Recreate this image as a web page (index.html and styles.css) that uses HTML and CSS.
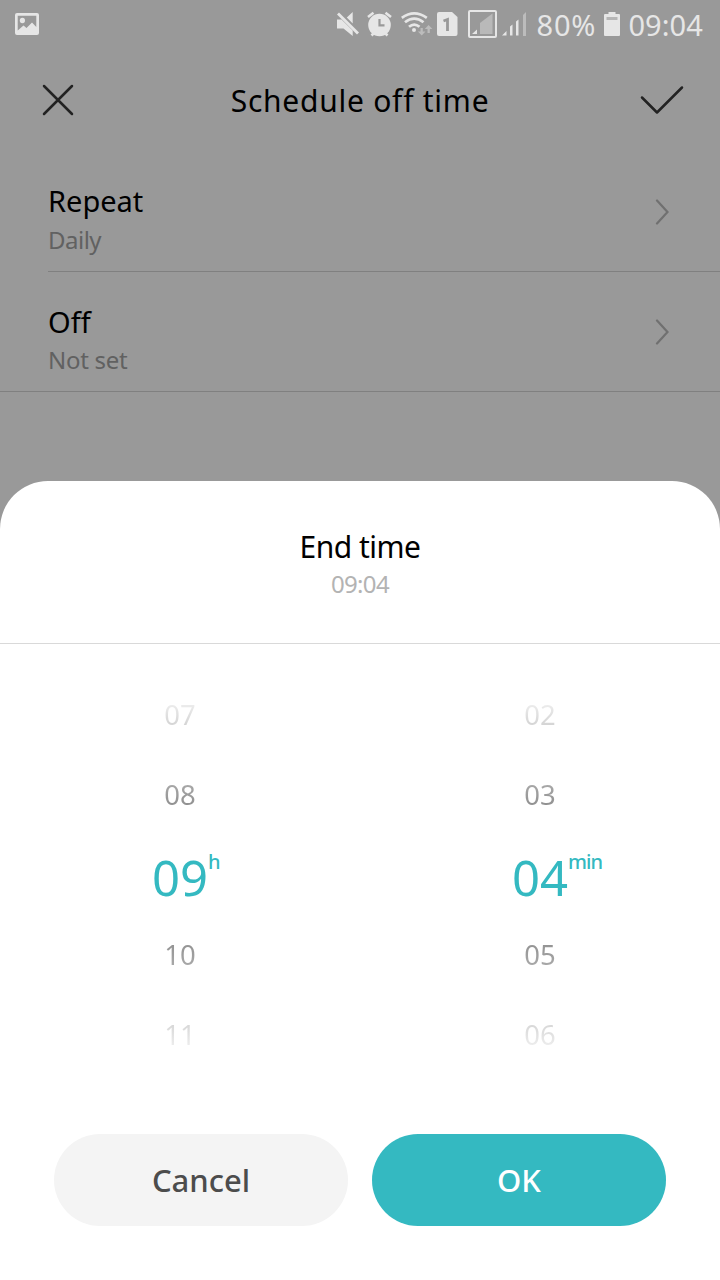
FILE: index.html
```html
<!DOCTYPE html>
<html lang="en">
<head>
<meta charset="utf-8">
<title>Schedule off time</title>
<link rel="stylesheet" href="styles.css">
</head>
<body>
<div class="screen">
  <header class="status">
    <svg class="status-icons" width="720" height="48" viewBox="0 0 720 48" fill="#e6e6e6">
      <path fill-rule="evenodd" d="M17 13H37Q39 13 39 15V33Q39 35 37 35H17Q15 35 15 33V15Q15 13 17 13ZM17.700 15.700V30.500L23.500 25.500L26.500 28L32 22.500L36.300 27V15.700Z"/>
      <ellipse cx="22.400" cy="20.500" rx="2.600" ry="2.700"/>
      <path d="M337 19.500H341.500L352.700 30.500V36L343.500 28.500H337ZM352.700 12V23.500L346.800 17.500Z"/>
      <path d="M338 13.500L358 33.500" fill="none" stroke="#e6e6e6" stroke-width="2.800"/>
      <circle cx="379.500" cy="25" r="11.300"/>
      <path d="M368 17L373.500 12.800M391 17L385.500 12.800M371.500 35.500L374 33M387.500 35.500L385 33" fill="none" stroke="#e6e6e6" stroke-width="2.600"/>
      <path d="M379.500 19V25.300H384.500" fill="none" stroke="#999" stroke-width="2.200"/>
      <g fill="none" stroke="#e6e6e6" stroke-width="2.700">
        <path d="M401.800 17.800Q414.200 9 426.800 17.800M405 22.300Q414.200 14.800 423.500 22.300M409 26.800Q414.200 22.300 419.500 26.800"/>
      </g>
      <circle cx="414" cy="30" r="2"/>
      <path d="M420.500 28H422.800V31.500H425.500L421.700 35.500L417.900 31.500H420.500ZM427.500 33V29H424.800L428.600 25L432.400 29H429.800V33Z" fill="#bcbcbc"/>
      <path d="M439 12H452L457.500 17V34Q457.500 36 455.500 36H439Q437 36 437 34V14Q437 12 439 12Z"/>
      <path d="M443.500 21L447.500 19.500V31" fill="none" stroke="#999" stroke-width="2.800"/>
      <rect x="469" y="11" width="27" height="26" rx="1" fill="none" stroke="#e6e6e6" stroke-width="2"/>
      <path d="M480 23L492.500 13.500V34H480Z" fill="#b9b9b9"/>
      <path d="M472 34L477 29.500V34ZM502 35.500L506.500 31V35.500ZM510 26.500L512.500 24.500V35.500H510ZM516 21.500L518.500 19.500V35.500H516Z"/>
      <path d="M523 15L526 12V36H523Z" fill="#bcbcbc"/>
      <path d="M608.500 12H615.500V14H619Q620 14 620 15V35Q620 36 619 36H605Q604 36 604 35V15Q604 14 605 14H608.500Z"/>
      <rect x="606.500" y="17" width="11" height="3" fill="#b5b5b5"/>
    </svg>
    <span class="battery">80%</span>
    <span class="clock">09:04</span>
  </header>

  <nav class="titlebar">
    <svg width="34" height="34" viewBox="0 0 34 34"><path d="M3 3L31 31M31 3L3 31"/></svg>
    <h1 class="title">Schedule off time</h1>
    <svg width="44" height="34" viewBox="0 0 44 34"><path d="M2 14.500L17 29.500L42 4.500"/></svg>
  </nav>

  <main class="settings">
    <section class="row">
      <div class="row-text"><div class="name">Repeat</div><div class="value">Daily</div></div>
      <svg class="chevron" width="14" height="26" viewBox="0 0 14 26"><path d="M2 1.500L12.500 13L2 24.500"/></svg>
    </section>
    <section class="row row-last">
      <div class="row-text"><div class="name">Off</div><div class="value">Not set</div></div>
      <svg class="chevron" width="14" height="26" viewBox="0 0 14 26"><path d="M2 1.500L12.500 13L2 24.500"/></svg>
    </section>
  </main>

  <section class="sheet">
    <div class="sheet-head">
      <h2 class="sheet-title">End time</h2>
      <div class="sheet-time">09:04</div>
    </div>
    <div class="picker">
      <div class="wheel">
        <div class="num fade-top">07</div>
        <div class="num near-top">08</div>
        <div class="num selected">09<span class="unit">h</span></div>
        <div class="num near-bottom">10</div>
        <div class="num fade-bottom">11</div>
      </div>
      <div class="wheel">
        <div class="num fade-top">02</div>
        <div class="num near-top">03</div>
        <div class="num selected">04<span class="unit">min</span></div>
        <div class="num near-bottom">05</div>
        <div class="num fade-bottom">06</div>
      </div>
    </div>
    <div class="actions">
      <button class="btn cancel">Cancel</button>
      <button class="btn ok">OK</button>
    </div>
  </section>
</div>
</body>
</html>
```

FILE: styles.css
```css
* { box-sizing: border-box; }
body { margin: 0; font-family: "Noto Sans", sans-serif; background: #999; }
.screen { width: 720px; height: 1280px; display: flex; flex-direction: column; background: #999; overflow: hidden; }

.status { position: relative; height: 48px; display: flex; justify-content: flex-end; gap: 32px; padding-right: 17px; font-size: 29px; line-height: 48px; color: #e6e6e6; }
.status-icons { position: absolute; left: 0; top: 0; }
.battery, .clock { padding-top: 1px; white-space: nowrap; }
.battery { letter-spacing: 0.9px; }
.clock { letter-spacing: 0.1px; }

.titlebar { height: 104px; display: flex; justify-content: space-between; align-items: center; padding: 0 36px 0 41px; }
.titlebar svg { fill: none; stroke: #222; stroke-width: 2.500; stroke-linecap: round; stroke-linejoin: round; }
.title { margin: 0; padding: 2px 0 0 5px; font-size: 30px; font-weight: 400; line-height: 40px; letter-spacing: 0.75px; color: #000; white-space: nowrap; }

.settings { height: 329px; }
.row { height: 120px; margin-left: 48px; padding-right: 51px; display: flex; justify-content: space-between; align-items: center; border-bottom: 1px solid #808080; }
.row-last { margin-left: 0; padding-left: 48px; }
.row-text { padding-top: 17px; }
.name { font-size: 29px; line-height: 40px; color: #000; }
.value { font-size: 24px; line-height: 38px; letter-spacing: -0.5px; color: #616161; }
.row-last .value { line-height: 36px; letter-spacing: -0.3px; }
.chevron { fill: none; stroke: #707070; stroke-width: 2.200; stroke-linecap: round; }

.sheet { flex: 1; background: #fff; border-radius: 48px 48px 0 0; }
.sheet-head { height: 163px; padding-top: 46px; text-align: center; border-bottom: 1px solid #d9d9d9; }
.sheet-title { margin: 0; font-size: 30px; font-weight: 400; line-height: 40px; letter-spacing: -0.5px; color: #000; }
.sheet-time { font-size: 24px; line-height: 34px; letter-spacing: -0.7px; color: #b3b3b3; }

.picker { display: grid; grid-template-columns: 1fr 1fr; padding-top: 31px; }
.wheel { display: grid; grid-template-rows: repeat(5, 80px); justify-items: center; }
.num { position: relative; font-size: 27.5px; line-height: 80px; color: transparent; background-clip: text; -webkit-background-clip: text; }
.fade-top { background-image: linear-gradient(#eee 35%, #d2d2d2 65%); }
.near-top { background-image: linear-gradient(#aaa 35%, #8e8e8e 65%); }
.near-bottom { background-image: linear-gradient(#929292 35%, #aaa 65%); }
.fade-bottom { background-image: linear-gradient(#d6d6d6 35%, #eee 65%); }
.selected { font-size: 49px; line-height: 84px; color: #34b9c1; }
.unit { position: absolute; left: 100%; top: 7px; font-size: 20px; line-height: 40px; font-weight: 500; letter-spacing: -0.9px; }

.actions { display: flex; gap: 24px; padding: 59px 54px 0; }
.btn { flex: 1; height: 92px; padding: 0 0 1px; border: 0; border-radius: 46px; font-family: inherit; font-size: 31px; font-weight: 500; line-height: 40px; }
.cancel { color: #4c4c4c; background: #f4f4f4; }
.ok { color: #fff; background: #34b9c1; }
```
